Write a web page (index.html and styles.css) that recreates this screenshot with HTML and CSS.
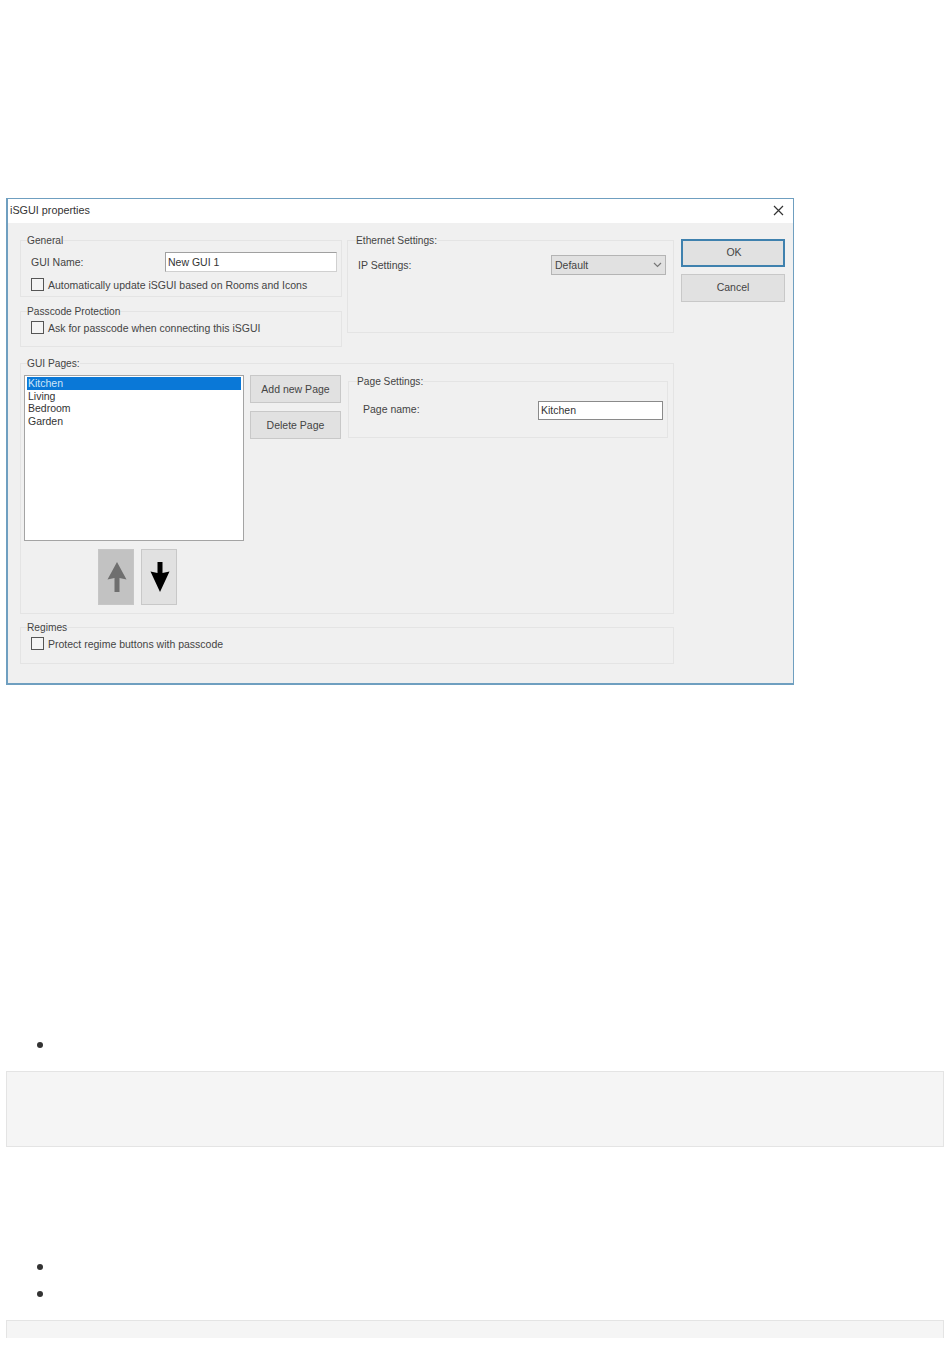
FILE: index.html
```html
<!DOCTYPE html>
<html lang="en">
<head>
<meta charset="utf-8">
<title>iSGUI properties</title>
<link rel="stylesheet" href="styles.css">
</head>
<body>
<section class="dialog">
  <header class="titlebar">
    <span class="title">iSGUI properties</span>
    <svg class="close" width="11" height="11" viewBox="0 0 11 11"><path d="M1 1l9 9M10 1L1 10" stroke="#333" stroke-width="1.200" fill="none"/></svg>
  </header>
  <div class="dialog-body">
    <div class="left-stack">
      <fieldset class="group general">
        <legend>General</legend>
        <div class="field-row">
          <span class="label">GUI Name:</span>
          <span class="input input-name">New GUI 1</span>
        </div>
        <label class="check"><span class="box"></span>Automatically update iSGUI based on Rooms and Icons</label>
      </fieldset>
      <fieldset class="group passcode">
        <legend>Passcode Protection</legend>
        <label class="check"><span class="box"></span>Ask for passcode when connecting this iSGUI</label>
      </fieldset>
    </div>
    <fieldset class="group ethernet">
      <legend>Ethernet Settings:</legend>
      <div class="field-row between">
        <span class="label">IP Settings:</span>
        <span class="select">Default
          <svg width="9" height="6" viewBox="0 0 9 6"><path d="M1 1l3.500 3.500L8 1" stroke="#777" stroke-width="1.200" fill="none"/></svg>
        </span>
      </div>
    </fieldset>
    <div class="actions">
      <span class="btn btn-ok">OK</span>
      <span class="btn btn-cancel">Cancel</span>
    </div>
    <fieldset class="group pages">
      <legend>GUI Pages:</legend>
      <div class="pages-row">
        <div class="list-col">
          <ul class="listbox">
            <li class="selected">Kitchen</li>
            <li>Living</li>
            <li>Bedroom</li>
            <li>Garden</li>
          </ul>
          <div class="arrows">
            <span class="arrow-btn arrow-disabled">
              <svg width="20" height="32" viewBox="0 0 20 32"><path d="M10 1L19.500 18.500 12.500 17V31H7.500V17L.5 18.500z" fill="#6f6f6f"/></svg>
            </span>
            <span class="arrow-btn">
              <svg width="20" height="32" viewBox="0 0 20 32"><path d="M7.500 1H12.500V12L19.500 10.500 10 31 .5 10.500 7.500 12z" fill="#000"/></svg>
            </span>
          </div>
        </div>
        <div class="page-buttons">
          <span class="btn btn-page">Add new Page</span>
          <span class="btn btn-page">Delete Page</span>
        </div>
        <fieldset class="group page-settings">
          <legend>Page Settings:</legend>
          <div class="field-row between">
            <span class="label">Page name:</span>
            <span class="input input-page">Kitchen</span>
          </div>
        </fieldset>
      </div>
    </fieldset>
    <fieldset class="group regimes">
      <legend>Regimes</legend>
      <label class="check"><span class="box"></span>Protect regime buttons with passcode</label>
    </fieldset>
  </div>
</section>

<ul class="bullets first"><li>&nbsp;</li></ul>
<div class="code-box tall"></div>
<ul class="bullets second"><li>&nbsp;</li><li>&nbsp;</li></ul>
<div class="code-box short"></div>
</body>
</html>
```
FILE: styles.css
```css
* { box-sizing: border-box; }
html, body { height: 1370px; overflow: hidden; }
body {
  margin: 0;
  padding: 198px 6px 0;
  background: #fff;
  font-family: "Liberation Sans", Arial, sans-serif;
  color: #333;
}

.dialog {
  width: 788px;
  height: 487px;
  border: 1px solid #6f9fc0;
  border-left-width: 2px;
  border-bottom-width: 2px;
  background: #f0f0f0;
  font-size: 10.500px;
  color: #444;
}
.titlebar {
  height: 24px;
  background: #fff;
  display: flex;
  align-items: center;
  justify-content: space-between;
  padding: 0 9px 2px 2px;
}
.title { color: #333; font-size: 10.800px; }

.dialog-body {
  display: grid;
  grid-template-columns: 322px 327px 106px;
  column-gap: 5px;
  padding: 10px 0 0 12px;
  align-items: start;
}
.left-stack { display: flex; flex-direction: column; gap: 7px; }

.group {
  margin: 0;
  padding: 0;
  min-width: 0;
  border: 1px solid #e4e4e4;
}
.group legend {
  margin-left: 6px;
  padding: 0;
  line-height: 16px;
  height: 14px;
  font-size: 10.200px;
  color: #444;
}
.general { height: 64px; }
.passcode { height: 43px; }
.ethernet { height: 100px; }
.pages { grid-column: 1 / 3; height: 258px; margin-top: 9px; }
.regimes { grid-column: 1 / 3; height: 44px; margin-top: 6px; }
.general, .passcode, .regimes { padding-left: 10px; }
.general legend, .passcode legend, .regimes legend { margin-left: -4px; }

.field-row { display: flex; align-items: center; }
.between { justify-content: space-between; }
.label { color: #444; }
.general .field-row { height: 24px; margin-top: 3px; }
.general .label { width: 134px; }

.input {
  display: flex;
  align-items: center;
  background: #fff;
  border: 1px solid #8c8c8c;
  padding: 0 0 1px 2px;
  color: #333;
}
.input-name {
  width: 172px;
  height: 20px;
  border-color: #a0a0a0 #d0d0d0 #d0d0d0 #a0a0a0;
  border-width: 1.500px;
}

.check { display: flex; align-items: center; height: 15px; color: #444; }
.box {
  width: 13px;
  height: 13px;
  margin-right: 4px;
  border: 1px solid #555;
  background: #f4f4f4;
  flex: none;
}
.general .check { margin-top: 3px; }
.passcode .check { margin-top: 2px; }
.regimes .check { margin-top: 2px; }

.ethernet { padding: 0 7px 0 10px; }
.ethernet legend { margin-left: -2px; }
.ethernet .field-row { height: 22px; margin-top: 7px; }
.select {
  width: 115px;
  height: 20px;
  display: flex;
  align-items: center;
  justify-content: space-between;
  padding: 0 3px;
  background: #e1e1e1;
  border: 1px solid #b4b4b4;
}

.actions { display: flex; flex-direction: column; gap: 7px; margin: 6px 0 0 2px; }
.btn {
  display: flex;
  align-items: center;
  justify-content: center;
  height: 28px;
  background: #e1e1e1;
  border: 1px solid #c8c8c8;
  color: #444;
}
.btn-ok {
  border: 2px solid #3f81ae;
  padding: 0 0 2px 2px;
}
.btn-cancel { padding-bottom: 2px; }

.pages-row { display: flex; align-items: flex-start; padding: 5px 0 0 3px; }
.list-col { width: 220px; flex: none; }
.listbox {
  list-style: none;
  margin: 0;
  padding: 1px 2px;
  height: 166px;
  background: #fff;
  border: 1px solid #a4a4a4;
  color: #333;
}
.listbox li { height: 12.500px; line-height: 12.500px; padding-left: 1px; }
.listbox .selected { background: #0a78d7; color: #cfe6f9; }

.arrows { display: flex; gap: 7px; margin: 8px 0 0 74px; }
.arrow-btn {
  width: 36px;
  height: 56px;
  display: flex;
  align-items: center;
  justify-content: center;
  padding-left: 2px;
  background: #e1e1e1;
  border: 1px solid #c8c8c8;
}
.arrow-disabled { background: #c2c2c2; border-color: #c6c6c6; }

.page-buttons { display: flex; flex-direction: column; gap: 8px; width: 91px; margin-left: 6px; flex: none; }
.page-settings {
  width: 320px;
  height: 64px;
  margin: -1px 0 0 7px;
  padding: 0 4px 0 14px;
}
.page-settings legend { margin-left: -6px; }
.page-settings .field-row { height: 19px; margin-top: 13px; }
.page-settings .label { margin-top: -4px; }
.input-page { width: 125px; height: 19px; border-color: #8a8a8a; }

.bullets {
  margin: 0;
  padding: 0 0 0 50px;
  font-size: 14px;
  line-height: 27px;
  color: #333;
}
.bullets li { height: 27px; }
.bullets li::marker { font-size: 20px; }
.first { margin-top: 346px; }
.second { margin-top: 106px; }
.code-box {
  width: 938px;
  background: #f5f5f5;
  border: 1.500px solid #e4e4e4;
}
.tall { height: 76px; margin-top: 13px; }
.short { height: 18px; margin-top: 13px; border-bottom: 0; }
```
